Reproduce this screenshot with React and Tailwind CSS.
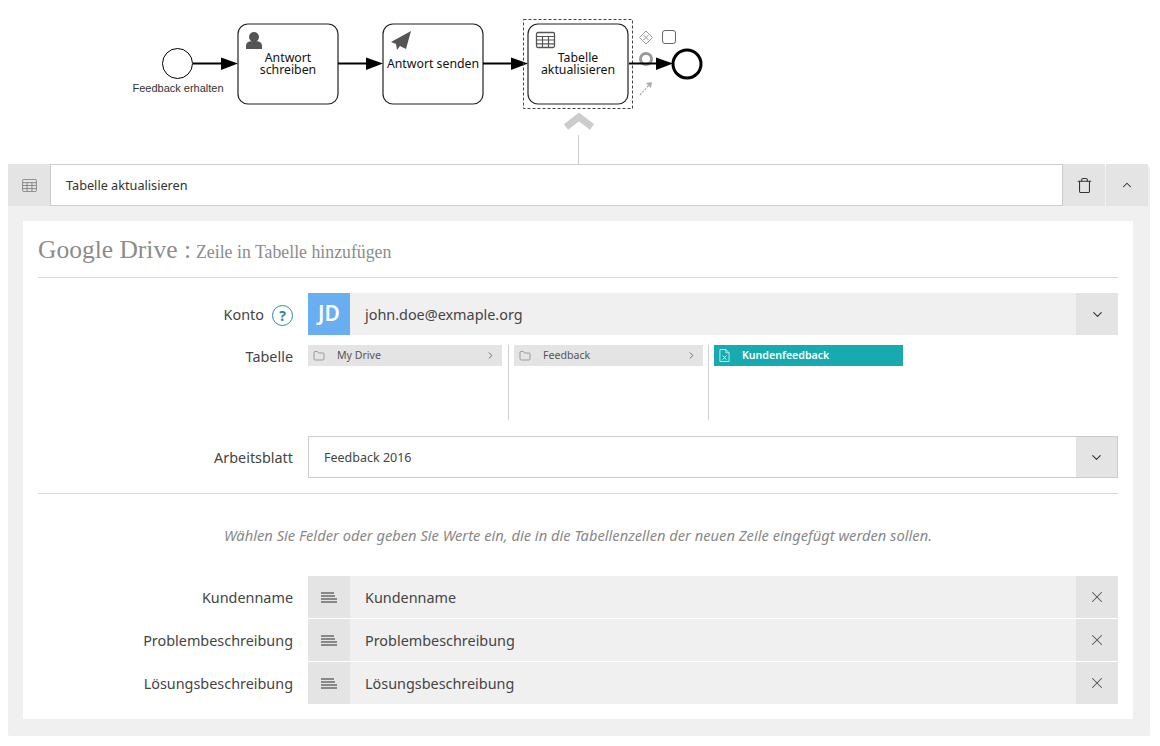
import React from "react";
import { ChevronDown, ChevronUp, ChevronRight, Folder, X, Trash } from "lucide-react";

const sans = "font-['Noto_Sans',sans-serif]";

const TableIcon = ({ className }) => (
  <svg viewBox="0 0 18 16" className={className} fill="none" stroke="currentColor">
    <rect x="0.5" y="0.5" width="17" height="15" rx="1.5" />
    <path d="M0.5 4.5h17M0.5 8h17M0.5 11.8h17M6 4.5v11M12 4.5v11" />
  </svg>
);

const Task = ({ x, lines, children }) => (
  <g>
    <rect x={x} y="24" width="100" height="80" rx="10" fill="#fff" stroke="#222" strokeWidth="1.2" />
    {children}
    {lines.map((line, i) => (
      <text key={line} x={x + 50} y={lines.length > 1 ? 62 + i * 12 : 68} textAnchor="middle" fontSize="12.3" fill="#111" fontFamily="Noto Sans, sans-serif">
        {line}
      </text>
    ))}
  </g>
);

const Arrow = ({ x1, x2 }) => (
  <g>
    <path d={`M${x1} 63.5H${x2 - 16}`} stroke="#000" strokeWidth="2" />
    <path d={`M${x2 - 17} 57.5L${x2} 63.5L${x2 - 17} 70Z`} fill="#000" />
  </g>
);

const Diagram = () => (
  <svg viewBox="0 0 1160 164" className="block w-full h-[164px]">
    <circle cx="177.5" cy="63.5" r="15" fill="#fff" stroke="#000" />
    <text x="178" y="92" textAnchor="middle" fontSize="11" fill="#333" fontFamily="Liberation Sans, sans-serif">Feedback erhalten</text>
    <Arrow x1={193} x2={238} />
    <Task x={238} lines={["Antwort", "schreiben"]}>
      <circle cx="254" cy="37" r="5" fill="#555" />
      <path d="M246 49v-3c0-4 3-5 8-5s8 1 8 5v3z" fill="#555" />
    </Task>
    <Arrow x1={338} x2={383} />
    <Task x={383} lines={["Antwort senden"]}>
      <path d="M411 31l-5 18-6-3-3 4-1-6zM411 31L391 42l5 2z" fill="#555" />
    </Task>
    <Arrow x1={483} x2={528} />
    <rect x="523.5" y="19.5" width="109" height="89" fill="none" stroke="#444" strokeDasharray="3 2" />
    <Task x={528} lines={["Tabelle", "aktualisieren"]}>
      <g transform="translate(536 32)" fill="none" stroke="#555">
        <rect x="0.5" y="0.5" width="18" height="15" rx="1.5" strokeWidth="1.3" />
        <path d="M0.5 4.5h18M0.5 8h18M0.5 11.8h18M6.5 4.5v11M12.5 4.5v11" strokeWidth="1.2" />
      </g>
    </Task>
    <path d="M646 31l6.5 6.5-6.5 6.5-6.5-6.5z" fill="#fff" stroke="#999" />
    <path d="M643.5 35l5 5M648.5 35l-5 5" stroke="#999" />
    <rect x="662.5" y="30.5" width="13" height="13" rx="2.5" fill="#fff" stroke="#666" />
    <circle cx="646" cy="59" r="5.5" fill="none" stroke="#999" strokeWidth="3" />
    <path d="M629 63.5H656" stroke="#000" strokeWidth="2" />
    <path d="M656 57.5L673 63.5L656 70Z" fill="#000" />
    <circle cx="687" cy="64" r="14" fill="#fff" stroke="#000" strokeWidth="3" />
    <path d="M640 95l10-11" stroke="#aaa" strokeWidth="1.3" strokeDasharray="2 1.5" />
    <path d="M646 83l6-1-1 6z" fill="#aaa" />
    <path d="M566 127l13-10 13 10" fill="none" stroke="#ccc" strokeWidth="7" />
    <path d="M578.5 135v29" stroke="#ccc" />
  </svg>
);

const Label = ({ children }) => (
  <div className="w-[255px] shrink-0 flex items-center justify-end gap-2 pt-[2px] text-[14.4px] text-[#444]">{children}</div>
);

const FieldRow = ({ name }) => (
  <div className="flex h-[42px] items-center gap-[15px]">
    <Label>{name}</Label>
    <div className="flex-1 flex h-full bg-[#f0f0f0]">
      <div className="w-[42px] bg-[#e4e4e4] flex flex-col items-center justify-center gap-[1px]">
        <span className="w-[16px] h-[2px] flex"><span className="w-[13px] bg-[#888]" /></span>
        <span className="w-[16px] h-[2px] flex"><span className="w-[14px] bg-[#888]" /></span>
        <span className="w-[16px] h-[2px] bg-[#888]" />
        <span className="w-[16px] h-[2px] bg-[#888]" />
      </div>
      <div className="flex-1 flex items-center pl-[15px] pt-[2px] text-[14.4px] text-[#444]">{name}</div>
      <div className="w-[42px] bg-[#e4e4e4] flex items-center justify-center text-[#555]">
        <X size={18} strokeWidth={1.4} />
      </div>
    </div>
  </div>
);

const Crumb = ({ icon, name, arrow, active, width }) => (
  <div className={`h-[21px] flex items-center pl-[5px] pr-[6px] ${width} ${active ? "bg-[#17abb0] text-white font-semibold" : "bg-[#e4e4e4] text-[#555]"}`}>
    {icon}
    <span className="flex-1 text-[10.6px] ml-[12px] pt-px">{name}</span>
    {arrow && <ChevronRight size={11} strokeWidth={1.8} />}
  </div>
);

export default function App() {
  return (
    <div className={`w-[1160px] h-[746px] bg-white overflow-hidden ${sans}`}>
      <Diagram />
      <div className="flow-root ml-[8px] mt-[2px] w-[1142px] h-[570px] bg-[#f0f0f0] rounded-[2px]">
        <div className="-mt-[2px] w-[1140px] h-[42px] flex">
          <div className="w-[42px] bg-[#e4e4e4] flex items-center justify-center text-[#777]">
            <TableIcon className="w-[15px] h-[13px]" />
          </div>
          <div className="flex-1 bg-white border border-[#ccc] flex items-center pl-[15px] pt-px text-[12.7px] text-[#333]">
            Tabelle aktualisieren
          </div>
          <div className="w-[42px] bg-[#e4e4e4] flex items-center justify-center text-[#333]">
            <Trash size={17} strokeWidth={1.5} />
          </div>
          <div className="w-[42px] ml-[1px] bg-[#e4e4e4] flex items-center justify-center text-[#333]">
            <ChevronUp size={14} strokeWidth={1.8} />
          </div>
        </div>
        <div className="mt-[15px] ml-[15px] w-[1110px] h-[498px] bg-white px-[15px]">
          <div className="h-[57px] border-b border-[#d8d8d8] flex items-baseline pt-[10px] font-['Liberation_Serif',serif] text-[#8c8c8c]">
            <span className="text-[25.5px]">Google Drive :</span>
            <span className="text-[17.8px] ml-[5px]">Zeile in Tabelle hinzufügen</span>
          </div>

          <div className="mt-[15px] flex h-[42px] gap-[15px]">
            <Label>
              Konto
              <span className="w-[21px] h-[21px] rounded-full border border-[#2f8a94] text-[#2f8a94] font-bold text-[14px] flex items-center justify-center">?</span>
            </Label>
            <div className="flex-1 flex bg-[#f0f0f0]">
              <div className="w-[42px] bg-[#6aaef2] text-white text-[21px] font-semibold flex items-center justify-center">JD</div>
              <div className="flex-1 flex items-center pl-[15px] pt-[2px] text-[14.4px] text-[#444]">john.doe@exmaple.org</div>
              <div className="w-[42px] bg-[#e4e4e4] flex items-center justify-center text-[#333]">
                <ChevronDown size={15} strokeWidth={1.8} />
              </div>
            </div>
          </div>

          <div className="mt-[10px] h-[75px] flex gap-[15px]">
            <div className="h-[22px] flex">
              <Label>Tabelle</Label>
            </div>
            <div className="flex">
              <Crumb width="w-[194px]" name="My Drive" arrow icon={<Folder size={12} strokeWidth={1} />} />
              <div className="w-px bg-[#d0d0d0] ml-[6px] mr-[5px]" />
              <Crumb width="w-[189px]" name="Feedback" arrow icon={<Folder size={12} strokeWidth={1} />} />
              <div className="w-px bg-[#d0d0d0] mx-[5px]" />
              <Crumb
                width="w-[189px]"
                name="Kundenfeedback"
                active
                icon={
                  <svg viewBox="0 0 12 14" className="w-[11px] h-[13px]" fill="none" stroke="currentColor">
                    <path d="M1 .5h6.5L11 4v9.5H1zM7.5.5V4H11" strokeWidth="0.8" />
                    <path d="M4 7l4 4.5M8 7l-4 4.5" strokeWidth="0.9" />
                  </svg>
                }
              />
            </div>
          </div>

          <div className="mt-[16px] flex h-[42px] gap-[15px]">
            <Label>Arbeitsblatt</Label>
            <div className="flex-1 flex border border-[#ccc]">
              <div className="flex-1 flex items-center pl-[15px] pt-[2px] text-[12.5px] text-[#444]">Feedback 2016</div>
              <div className="w-[41px] bg-[#e4e4e4] flex items-center justify-center text-[#333]">
                <ChevronDown size={15} strokeWidth={1.8} />
              </div>
            </div>
          </div>

          <div className="mt-[15px] border-t border-[#d8d8d8]" />

          <p className="mt-[31px] text-center italic text-[14.7px] leading-[20px] text-[#888]">
            Wählen Sie Felder oder geben Sie Werte ein, die in die Tabellenzellen der neuen Zeile eingefügt werden sollen.
          </p>

          <div className="mt-[31px] flex flex-col gap-px">
            <FieldRow name="Kundenname" />
            <FieldRow name="Problembeschreibung" />
            <FieldRow name="Lösungsbeschreibung" />
          </div>
        </div>
      </div>
    </div>
  );
}
